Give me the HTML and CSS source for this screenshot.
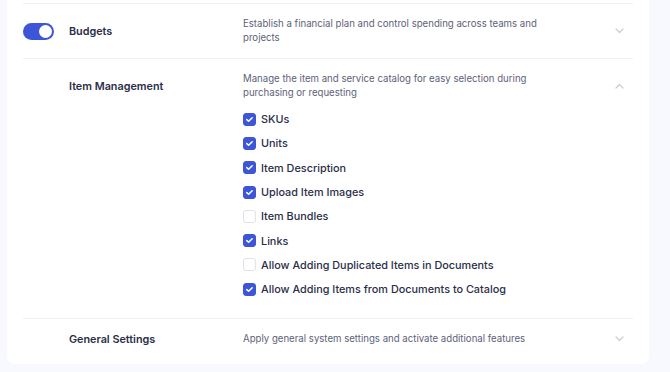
FILE: index.html
```html
<!DOCTYPE html>
<html lang="en">
<head>
    <meta charset="UTF-8">
    <meta name="viewport" content="width=device-width, initial-scale=1.0">
    <title>Modules</title>
    <link rel="stylesheet" href="styles.css">
</head>
<body>
    <div class="page">
        <div class="card">
            <div class="module">
                <div class="module-head">
                    <div class="toggle-col">
                        <span class="toggle on"><span class="knob"></span></span>
                    </div>
                    <div class="module-title">Budgets</div>
                    <div class="module-desc">Establish a financial plan and control spending across teams and projects</div>
                    <svg class="chevron" width="9" height="6" viewBox="0 0 9 6"><path d="M1 1l3.5 3.5L8 1" fill="none" stroke="#c9ccd8" stroke-width="1.2" stroke-linecap="round" stroke-linejoin="round"/></svg>
                </div>
            </div>

            <div class="module">
                <div class="module-head">
                    <div class="toggle-col"></div>
                    <div class="module-title">Item Management</div>
                    <div class="module-desc">Manage the item and service catalog for easy selection during purchasing or requesting</div>
                    <svg class="chevron" width="9" height="6" viewBox="0 0 9 6"><path d="M1 5l3.5-3.5L8 5" fill="none" stroke="#c9ccd8" stroke-width="1.2" stroke-linecap="round" stroke-linejoin="round"/></svg>
                </div>
                <ul class="options">
                    <li class="opt"><span class="box checked"></span>SKUs</li>
                    <li class="opt"><span class="box checked"></span>Units</li>
                    <li class="opt"><span class="box checked"></span>Item Description</li>
                    <li class="opt"><span class="box checked"></span>Upload Item Images</li>
                    <li class="opt"><span class="box"></span>Item Bundles</li>
                    <li class="opt"><span class="box checked"></span>Links</li>
                    <li class="opt"><span class="box"></span>Allow Adding Duplicated Items in Documents</li>
                    <li class="opt"><span class="box checked"></span>Allow Adding Items from Documents to Catalog</li>
                </ul>
            </div>

            <div class="module last">
                <div class="module-head">
                    <div class="toggle-col"></div>
                    <div class="module-title">General Settings</div>
                    <div class="module-desc">Apply general system settings and activate additional features</div>
                    <svg class="chevron" width="9" height="6" viewBox="0 0 9 6"><path d="M1 1l3.5 3.5L8 1" fill="none" stroke="#c9ccd8" stroke-width="1.2" stroke-linecap="round" stroke-linejoin="round"/></svg>
                </div>
            </div>
        </div>
    </div>
</body>
</html>
```

FILE: styles.css
```css
* {
    margin: 0;
    padding: 0;
    box-sizing: border-box;
}

body {
    font-family: 'Inter', 'Noto Sans', sans-serif;
    background: #f8f9fe;
    color: #2a2e48;
    height: 100vh;
    overflow: hidden;
}

.page {
    padding: 0 21px 0 7px;
}

.card {
    background: #ffffff;
    border-radius: 8px;
    margin-top: -20px;
    padding: 23px 16px 2px;
}

.module {
    border-top: 1px solid #eef0f5;
}

.module-head {
    display: flex;
    align-items: center;
    padding: 13px 0;
}

.module.last .module-head {
    padding: 13px 0 16px;
}

.toggle-col {
    flex: 0 0 46px;
    display: flex;
    align-items: center;
}

.toggle {
    display: flex;
    align-items: center;
    justify-content: flex-end;
    width: 31px;
    height: 17px;
    border-radius: 9px;
    background: #3d56d8;
    padding: 2px;
}

.knob {
    width: 13px;
    height: 13px;
    border-radius: 50%;
    background: #ffffff;
}

.module-title {
    flex: 0 0 174px;
    font-size: 10.8px;
    font-weight: 600;
    color: #2a2e48;
}

.module-desc {
    flex: 0 0 300px;
    font-size: 9.65px;
    line-height: 14px;
    color: #5d6278;
}

.chevron {
    margin-left: auto;
    margin-right: 9px;
}

.options {
    list-style: none;
    margin: -6px 0 0 220px;
    padding-bottom: 17px;
}

.opt {
    display: flex;
    align-items: center;
    height: 24.3px;
    font-size: 10.85px;
    font-weight: 500;
    color: #2a2e48;
}

.box {
    width: 13px;
    height: 13px;
    border-radius: 3px;
    border: 1px solid #dfe2ea;
    background: #ffffff;
    margin-right: 5px;
    flex-shrink: 0;
}

.box.checked {
    border-color: #3d56d8;
    background: #3d56d8 url("data:image/svg+xml,%3Csvg xmlns='http://www.w3.org/2000/svg' width='13' height='13' viewBox='0 0 13 13'%3E%3Cpath d='M3.8 6.6l1.8 1.7 3.6-3.6' fill='none' stroke='white' stroke-width='1.5' stroke-linecap='round' stroke-linejoin='round'/%3E%3C/svg%3E") center / 13px 13px no-repeat;
}
```
